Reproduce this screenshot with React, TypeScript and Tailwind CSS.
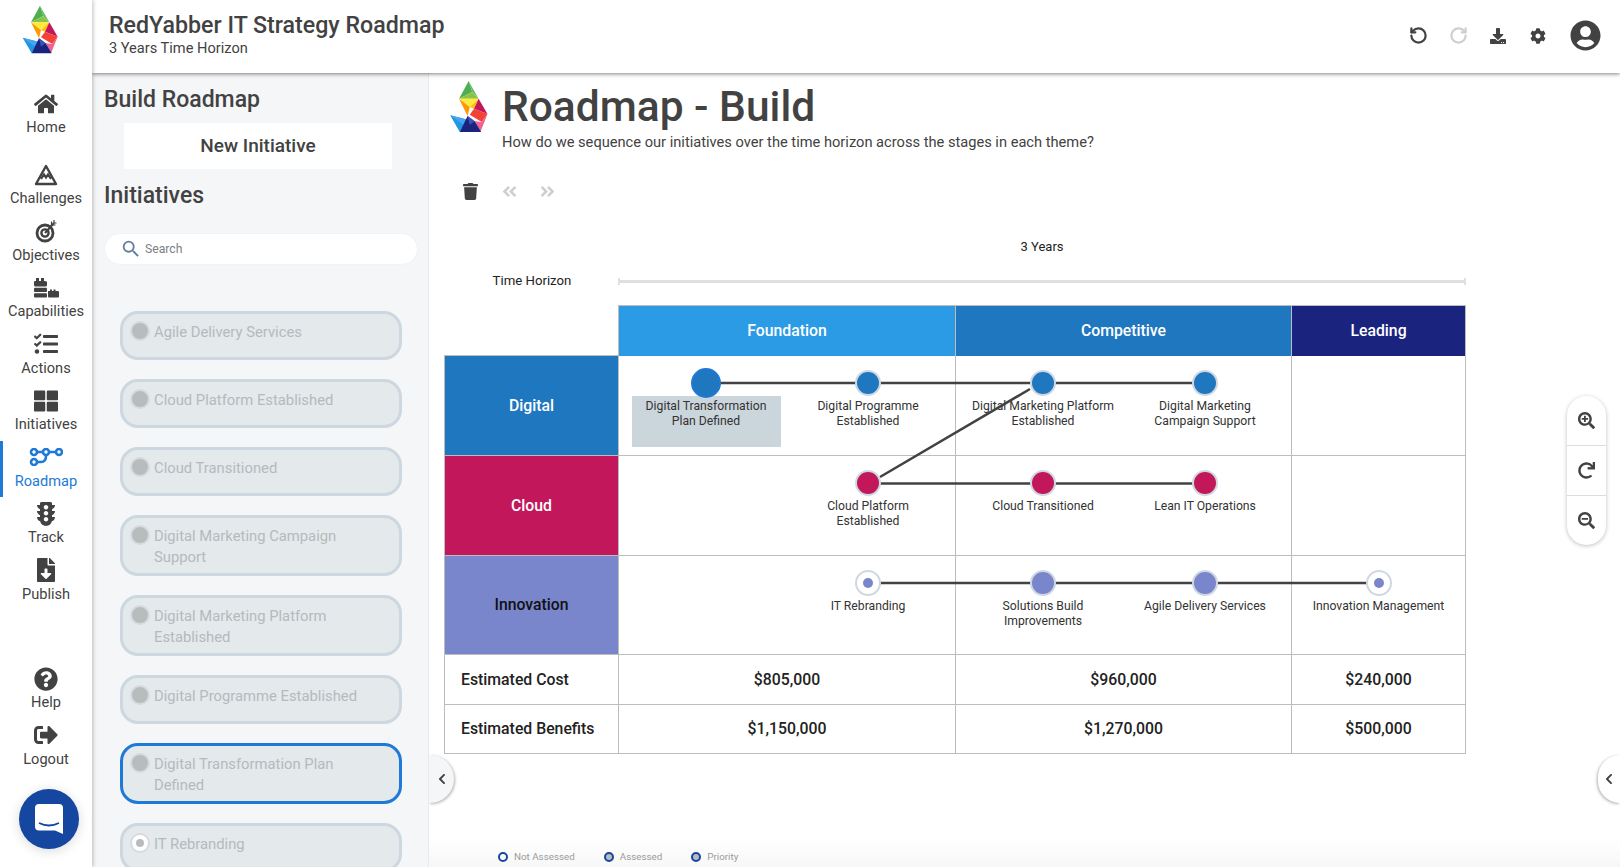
import React from "react";
import {
  FaHome, FaTasks, FaThLarge, FaTrafficLight, FaFileDownload, FaQuestionCircle, FaSignOutAlt,
  FaDownload, FaCog, FaUserCircle, FaTrash, FaAngleDoubleLeft, FaAngleDoubleRight,
  FaSearchPlus, FaSearchMinus, FaRedo, FaChevronLeft,
} from "react-icons/fa";
import { MdSearch } from "react-icons/md";
import { RotateCcw, RotateCw } from "lucide-react";

function Logo({ size }: { size: number }) {
  return (
    <svg width={size} height={size} viewBox="0 0 180 180" className="shrink-0">
      <polygon points="75,17 48,67 85,48" fill="#4caf50" />
      <polygon points="75,17 103,67 85,48" fill="#66bb6a" />
      <polygon points="48,67 103,67 85,48" fill="#8bc34a" />
      <polygon points="48,67 103,67 78,90" fill="#ffeb3b" />
      <polygon points="48,67 78,90 72,115" fill="#ff9800" />
      <polygon points="78,90 103,67 90,95" fill="#ffc107" />
      <polygon points="103,67 128,110 90,95" fill="#c2185b" />
      <polygon points="90,95 128,110 112,132 78,112" fill="#f44336" />
      <polygon points="92,130 112,132 128,110 108,160" fill="#f06292" />
      <polygon points="23,113 70,125 50,160" fill="#2196e3" />
      <polygon points="23,113 70,125 60,140" fill="#42a5f5" />
      <polygon points="72,115 92,130 110,160 50,160" fill="#1a237e" />
      <polygon points="72,115 92,130 78,140" fill="#3f51b5" />
    </svg>
  );
}

const IconChallenges = () => (
  <svg width="24" height="22" viewBox="0 0 24 22" fill="none" stroke="currentColor">
    <path d="M12 2 L22 20 H2 Z" strokeWidth="2.4" strokeLinejoin="round" />
    <path d="M7 15 L10 10.5 L12 13.5 L14 10.5 L17 15" strokeWidth="2.2" />
  </svg>
);
const IconObjectives = () => (
  <svg width="22" height="24" viewBox="0 0 22 24" fill="none" stroke="currentColor">
    <circle cx="10" cy="14" r="8" strokeWidth="2.8" />
    <circle cx="10" cy="14" r="3.6" strokeWidth="2.4" />
    <path d="M10 14 L19 4" strokeWidth="2" />
    <path d="M16.5 2.5 V6 H20.5 M19 1 V4 H21.5" strokeWidth="1.2" />
  </svg>
);
const IconCapabilities = () => (
  <svg width="26" height="20" viewBox="0 0 26 20" fill="currentColor">
    <path d="M1 4 Q1 3 2 3 H3 V0 H6 V3 H8 V0 H11 V3 Q14 3 14 4 V7 Q14 8.5 12.5 8.5 H2.5 Q1 8.5 1 7 Z" />
    <rect x="1" y="9.7" width="13" height="4.3" rx="1" />
    <rect x="1" y="15.2" width="13" height="4.3" rx="1" />
    <path d="M15 13 H17 V11.4 H19 V13 H20.5 V11.4 H22.5 V13 H25 Q26 13 26 14 V18.5 Q26 19.5 25 19.5 H16 Q15 19.5 15 18.5 Z" />
  </svg>
);
const IconRoadmap = () => (
  <svg width="34" height="18" viewBox="0 0 34 18" fill="none" stroke="currentColor">
    <circle cx="5" cy="4" r="3" strokeWidth="2.6" />
    <circle cx="17" cy="4" r="3" strokeWidth="2.6" />
    <circle cx="30" cy="4" r="3" strokeWidth="2.6" />
    <circle cx="5" cy="14" r="3" strokeWidth="2.6" />
    <path d="M8 4 H14 M20 4 H27" strokeWidth="2.6" />
    <path d="M8 14 H12 Q17 14 17 8" strokeWidth="2.6" />
  </svg>
);

function NavItem({ icon, label, active }: { icon: React.ReactNode; label: string; active?: boolean }) {
  return (
    <div
      className={
        "relative flex h-[56.5px] flex-col items-center justify-center pb-[4px] " +
        (active ? "text-[#1e7ad6]" : "text-[#424242]")
      }
    >
      {active && <div className="absolute left-0 top-0 h-full w-[3px] bg-[#1e7ad6]" />}
      <div className="flex h-[28px] items-center justify-center pt-[1px] text-[24px]">{icon}</div>
      <div className="text-[14.6px] leading-[20px]">{label}</div>
    </div>
  );
}

function Sidebar() {
  return (
    <div className="relative z-20 flex h-full w-[92px] shrink-0 flex-col bg-white shadow-[1px_0_4px_rgba(0,0,0,0.25)]">
      <div className="flex h-[87px] justify-start pl-[15px]">
        <Logo size={60} />
      </div>
      <div className="h-[56px]">
        <NavItem icon={<FaHome />} label="Home" />
      </div>
      <div className="h-[15px]" />
      <NavItem icon={<IconChallenges />} label="Challenges" />
      <NavItem icon={<IconObjectives />} label="Objectives" />
      <NavItem icon={<IconCapabilities />} label="Capabilities" />
      <NavItem icon={<FaTasks />} label="Actions" />
      <NavItem icon={<FaThLarge />} label="Initiatives" />
      <NavItem active icon={<IconRoadmap />} label="Roadmap" />
      <NavItem icon={<FaTrafficLight />} label="Track" />
      <NavItem icon={<FaFileDownload />} label="Publish" />
      <div className="h-[52px]" />
      <NavItem icon={<FaQuestionCircle />} label="Help" />
      <NavItem icon={<FaSignOutAlt />} label="Logout" />
      <div className="mt-[14px] pl-[19px]">
        <div className="flex h-[60px] w-[60px] items-center justify-center rounded-full bg-[#1546a0] shadow-[0_2px_12px_rgba(0,0,0,0.15)]">
          <svg width="30" height="32" viewBox="0 0 28 32">
            <path d="M4 1 H24 Q28 1 28 5 V31 L20 27.5 H4 Q0 27.5 0 23.5 V5 Q0 1 4 1 Z" fill="#fff" />
            <path d="M4 20 Q14 25 24 20" fill="none" stroke="#1546a0" strokeWidth="1.8" />
          </svg>
        </div>
      </div>
    </div>
  );
}

function Header() {
  return (
    <div className="relative z-10 flex h-[73px] shrink-0 items-center justify-between bg-white pl-[17px] pr-[19px] shadow-[0_1px_4px_rgba(0,0,0,0.5)]">
      <div className="-mt-[5px]">
        <div className="text-[23.2px] font-medium leading-[29px] text-[#424242]">RedYabber IT Strategy Roadmap</div>
        <div className="text-[14.6px] leading-[17px] text-[#424242]">3 Years Time Horizon</div>
      </div>
      <div className="-mt-[2px] flex items-center text-[#424242]">
        <RotateCcw size={19} strokeWidth={2.8} />
        <RotateCw size={19} strokeWidth={2.8} className="ml-[21px] text-[#cfcfcf]" />
        <FaDownload className="ml-[22px] text-[16px]" />
        <FaCog className="ml-[24px] text-[16px]" />
        <FaUserCircle className="ml-[24px] text-[31px]" />
      </div>
    </div>
  );
}

const initiatives = [
  { t: "Agile Delivery Services" },
  { t: "Cloud Platform Established" },
  { t: "Cloud Transitioned" },
  { t: "Digital Marketing Campaign Support", two: true },
  { t: "Digital Marketing Platform Established", two: true },
  { t: "Digital Programme Established" },
  { t: "Digital Transformation Plan Defined", two: true, selected: true },
  { t: "IT Rebranding", hollow: true },
];

function Card({ t, two, selected, hollow }: { t: string; two?: boolean; selected?: boolean; hollow?: boolean }) {
  return (
    <div
      className={
        "flex shrink-0 items-start rounded-[18px] border-[3px] bg-[#e4e9ec] pl-[7px] pr-[20px] pt-[7px] " +
        (two ? "h-[61px] " : "h-[49px] ") +
        (selected ? "border-[#1e7ad6]" : "border-[#cdd7df]")
      }
    >
      {hollow ? (
        <div className="flex h-[20px] w-[20px] shrink-0 items-center justify-center rounded-full border-2 border-[#d4dbe1] bg-white">
          <div className="h-[8px] w-[8px] rounded-full bg-[#b9bcbd]" />
        </div>
      ) : (
        <div className="h-[20px] w-[20px] shrink-0 rounded-full border-2 border-[#d4dbe1] bg-[#b9bcbd]" />
      )}
      <div className="ml-[4px] mt-[1px] text-[14.8px] leading-[21px] text-[#b5babd]">{t}</div>
    </div>
  );
}

function Panel() {
  return (
    <div className="relative h-full w-[337px] shrink-0 overflow-hidden border-r border-[#e8eaed] bg-[#f5f6f8]">
      <div className="pl-[12px] pt-[13px]">
        <div className="text-[23px] font-medium leading-[28px] text-[#424242]">Build Roadmap</div>
      </div>
      <div className="ml-[32px] mt-[9px] flex h-[46px] w-[268px] items-center justify-center bg-white text-[19px] font-medium text-[#424242]">
        New Initiative
      </div>
      <div className="mt-[13px] pl-[12px] text-[23px] font-medium leading-[28px] text-[#424242]">Initiatives</div>
      <div className="ml-[13px] mt-[24px] flex h-[30px] w-[312px] items-center rounded-full bg-white pl-[15px] shadow-[0_0_2px_rgba(0,0,0,0.06)]">
        <MdSearch className="text-[22px] text-[#64809e]" />
        <span className="ml-[3px] text-[12.2px] text-[#7b7f85]">Search</span>
      </div>
      <div className="ml-[28px] mt-[47px] flex w-[282px] flex-col gap-[19px]">
        {initiatives.map((c) => (
          <Card key={c.t} {...c} />
        ))}
      </div>
    </div>
  );
}

type NodeT = { label: string[]; color: string; hollow?: boolean; big?: boolean; selected?: boolean };

function Node({ n }: { n: NodeT }) {
  return (
    <div className="flex w-[162px] flex-col items-center">
      <div className="relative z-20 flex h-[26px] items-center justify-center">
        {n.hollow ? (
          <div className="flex h-[26px] w-[26px] items-center justify-center rounded-full border-2 border-[#cfd8e2] bg-white">
            <div className="h-[10px] w-[10px] rounded-full" style={{ background: n.color }} />
          </div>
        ) : n.big ? (
          <div className="h-[30px] w-[30px] rounded-full border-2 border-[#1e7ad6]" style={{ background: n.color }} />
        ) : (
          <div className="h-[26px] w-[26px] rounded-full border-2 border-[#cfd8e2]" style={{ background: n.color }} />
        )}
      </div>
      <div
        className={
          "h-[51px] w-[149px] pt-[3px] text-center text-[12.2px] leading-[14.5px] text-[#333] " +
          (n.selected ? "bg-[#cbd5dc]" : "")
        }
      >
        {n.label.map((l) => (
          <div key={l}>{l}</div>
        ))}
      </div>
    </div>
  );
}

const BLUE = "#1f77bf";
const PINK = "#c2185b";
const PURPLE = "#7986cb";

function Stage({ nodes, cls }: { nodes: NodeT[]; cls: string }) {
  return (
    <div className={"flex h-full items-start pt-[14px] " + cls}>
      {nodes.map((n) => (
        <Node key={n.label.join()} n={n} />
      ))}
    </div>
  );
}

const C = "border-[#bdbdbd]";

function RoadmapTable() {
  const rows: { name: string; bg: string; text: string; a: NodeT[]; aCls: string; b: NodeT[]; c: NodeT[] }[] = [
    {
      name: "Digital",
      bg: "bg-[#1f77bf]",
      text: "text-white",
      aCls: "pl-[6px]",
      a: [
        { label: ["Digital Transformation", "Plan Defined"], color: BLUE, big: true, selected: true },
        { label: ["Digital Programme", "Established"], color: BLUE },
      ],
      b: [
        { label: ["Digital Marketing Platform", "Established"], color: BLUE },
        { label: ["Digital Marketing", "Campaign Support"], color: BLUE },
      ],
      c: [],
    },
    {
      name: "Cloud",
      bg: "bg-[#c2185b]",
      text: "text-white",
      aCls: "pl-[168px]",
      a: [{ label: ["Cloud Platform", "Established"], color: PINK }],
      b: [
        { label: ["Cloud Transitioned"], color: PINK },
        { label: ["Lean IT Operations"], color: PINK },
      ],
      c: [],
    },
    {
      name: "Innovation",
      bg: "bg-[#7986cb]",
      text: "text-[#111]",
      aCls: "pl-[168px]",
      a: [{ label: ["IT Rebranding"], color: PURPLE, hollow: true }],
      b: [
        { label: ["Solutions Build", "Improvements"], color: PURPLE },
        { label: ["Agile Delivery Services"], color: PURPLE },
      ],
      c: [{ label: ["Innovation Management"], color: PURPLE, hollow: true }],
    },
  ];
  return (
    <div className="relative ml-[15px] w-[1022px]">
      <div className="grid grid-cols-[174px_337px_336px_175px] grid-rows-[51px_100px_100px_99px_50px_49px] text-[15.8px]">
        <div className={"border-b " + C} />
        <div className={"flex items-center justify-center border-l border-t bg-[#2b9be5] font-medium text-white " + C}>Foundation</div>
        <div className={"flex items-center justify-center border-l border-t bg-[#1f77bf] font-medium text-white " + C}>Competitive</div>
        <div className={"flex items-center justify-center border-l border-r border-t bg-[#1a237e] font-medium text-white " + C}>Leading</div>
        {rows.map((r) => (
          <React.Fragment key={r.name}>
            <div className={"flex items-center justify-center border-b border-l font-medium " + C + " " + r.bg + " " + r.text}>{r.name}</div>
            <div className={"border-b border-l " + C}>
              <Stage nodes={r.a} cls={r.aCls} />
            </div>
            <div className={"border-b border-l " + C}>
              <Stage nodes={r.b} cls="pl-[6px]" />
            </div>
            <div className={"border-b border-l border-r " + C}>
              <Stage nodes={r.c} cls="justify-center" />
            </div>
          </React.Fragment>
        ))}
        {[
          ["Estimated Cost", "$805,000", "$960,000", "$240,000"],
          ["Estimated Benefits", "$1,150,000", "$1,270,000", "$500,000"],
        ].map((r) => (
          <React.Fragment key={r[0]}>
            <div className={"flex items-center border-b border-l pl-[16px] font-medium text-[#222] " + C}>{r[0]}</div>
            <div className={"flex items-center justify-center border-b border-l font-medium text-[#222] " + C}>{r[1]}</div>
            <div className={"flex items-center justify-center border-b border-l font-medium text-[#222] " + C}>{r[2]}</div>
            <div className={"flex items-center justify-center border-b border-l border-r font-medium text-[#222] " + C}>{r[3]}</div>
          </React.Fragment>
        ))}
      </div>
      <svg className="pointer-events-none absolute left-0 top-0 z-10" width="1022" height="350" fill="none" stroke="#424242" strokeWidth="2.5">
        <path d="M262 78 H760" />
        <path d="M424 178.5 H760" />
        <path d="M424 278 H934" />
        <path d="M436 172 L586 84" />
      </svg>
    </div>
  );
}

function Main() {
  return (
    <div className="relative h-full min-w-0 flex-1 overflow-hidden bg-white">
      <div className="flex pl-[13px] pt-[2px]">
        <Logo size={64} />
        <div className="ml-[-4px] mt-[6px]">
          <div className="text-[42.5px] font-medium leading-[52px] text-[#424242]">Roadmap - Build</div>
          <div className="-mt-[1px] text-[14.65px] leading-[20px] text-[#424242]">
            How do we sequence our initiatives over the time horizon across the stages in each theme?
          </div>
        </div>
      </div>
      <div className="mt-[31px] flex items-center pl-[33px] text-[17px]">
        <FaTrash className="text-[#424242]" />
        <FaAngleDoubleLeft className="ml-[22px] text-[#cfcfcf]" />
        <FaAngleDoubleRight className="ml-[21px] text-[#cfcfcf]" />
      </div>
      <div className="mt-[38px] flex pl-[189px] text-[13px] leading-[18px] text-[#222]">
        <div className="w-[848px] text-center">3 Years</div>
      </div>
      <div className="mt-[16px] flex items-center text-[13.2px] leading-[18px] text-[#222]">
        <div className="w-[189px] pl-[17px] text-center">Time Horizon</div>
        <div className="flex w-[848px] items-center">
          <div className="h-[7px] w-[2px] bg-[#e0e0e0]" />
          <div className="h-[3px] flex-1 bg-[#e0e0e0]" />
          <div className="h-[7px] w-[2px] bg-[#e0e0e0]" />
        </div>
      </div>
      <div className="mt-[15px]">
        <RoadmapTable />
      </div>

      <div className="absolute left-0 top-[682px] flex h-[48px] w-[25px] items-center justify-center rounded-r-[24px] bg-[#f5f6f8] shadow-[1px_1px_3px_rgba(0,0,0,0.3)]">
        <FaChevronLeft className="text-[12px] text-[#424242]" />
      </div>
      <div className="absolute right-0 top-[682px] flex h-[48px] w-[22px] items-center justify-center rounded-l-[24px] bg-white shadow-[-1px_1px_3px_rgba(0,0,0,0.3)]">
        <FaChevronLeft className="text-[12px] text-[#424242]" />
      </div>
      <div className="absolute right-[14px] top-[323px] flex w-[39px] flex-col rounded-[20px] bg-white shadow-[0_1px_4px_rgba(0,0,0,0.25)]">
        <div className="flex h-[50px] items-center justify-center border-b border-[#ddd]"><FaSearchPlus className="text-[17px] text-[#424242]" /></div>
        <div className="flex h-[50px] items-center justify-center border-b border-[#ddd]"><FaRedo className="text-[17px] text-[#424242]" /></div>
        <div className="flex h-[49px] items-center justify-center"><FaSearchMinus className="text-[17px] text-[#424242]" /></div>
      </div>
      <div className="absolute bottom-0 left-0 right-0 flex h-[28px] items-start bg-gradient-to-b from-white to-[#f7f7f7] pl-[69px] pt-[12px] text-[9.8px] leading-[12px] text-[#9a9a9a]">
        <div className="flex items-center"><span className="h-[10px] w-[10px] rounded-full border-2 border-[#1546a0] bg-white" /><span className="ml-[6px]">Not Assessed</span></div>
        <div className="ml-[29px] flex items-center"><span className="h-[10px] w-[10px] rounded-full border-2 border-[#1546a0] bg-[#b9bcbd]" /><span className="ml-[6px]">Assessed</span></div>
        <div className="ml-[29px] flex items-center"><span className="h-[10px] w-[10px] rounded-full border-2 border-[#1546a0] bg-[#b9bcbd]" /><span className="ml-[6px]">Priority</span></div>
      </div>
    </div>
  );
}

export default function App() {
  return (
    <div className="flex h-[867px] w-[1620px] overflow-hidden bg-white font-['Roboto',sans-serif]">
      <Sidebar />
      <div className="flex min-w-0 flex-1 flex-col">
        <Header />
        <div className="flex min-h-0 flex-1">
          <Panel />
          <Main />
        </div>
      </div>
    </div>
  );
}
